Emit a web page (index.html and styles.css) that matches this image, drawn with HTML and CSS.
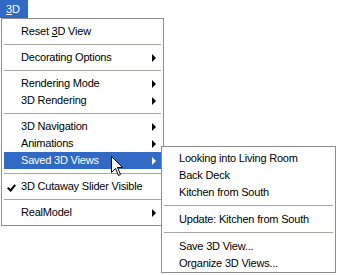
FILE: index.html
```html
<!DOCTYPE html>
<html lang="en">
<head>
    <meta charset="UTF-8">
    <title>3D menu</title>
<link rel="stylesheet" href="styles.css">
</head>
<body>

<div class="menubar">
    <span class="tab"><u>3</u>D</span>
</div>

<div class="menu">
    <div class="item">Reset <u>3</u>D View</div>
    <div class="sep"></div>
    <div class="item sub">Decorating Options</div>
    <div class="sep"></div>
    <div class="item sub">Rendering Mode</div>
    <div class="item sub">3D Rendering</div>
    <div class="sep"></div>
    <div class="item sub">3D Navigation</div>
    <div class="item sub">Animations</div>
    <div class="item sub active">Saved 3D Views</div>
    <div class="sep"></div>
    <div class="item checked">3D Cutaway Slider Visible</div>
    <div class="sep"></div>
    <div class="item sub">RealModel</div>

    <div class="menu submenu">
        <div class="item">Looking into Living Room</div>
        <div class="item">Back Deck</div>
        <div class="item">Kitchen from South</div>
        <div class="sep"></div>
        <div class="item">Update: Kitchen from South</div>
        <div class="sep"></div>
        <div class="item">Save 3D View...</div>
        <div class="item">Organize 3D Views...</div>
    </div>

    <svg class="cursor" width="13" height="21" viewBox="0 0 13 21">
        <path d="M0.5 0.5 L0.5 16.5 L4.5 12.5 L7.5 19.5 L9.5 18.5 L6.5 11.5 L11.5 11.5 Z" fill="#fff" stroke="#000" stroke-width="1"/>
    </svg>
</div>

</body>
</html>
```

FILE: styles.css
```css
html,
body {
  height: 100%;
}

body {
  margin: 0;
  min-height: 275px;
  background: #fff;
  font-family: 'Liberation Sans', Tahoma, sans-serif;
  font-size: 11px;
  letter-spacing: -0.2px;
  color: #000;
}

.menubar {
  height: 18px;
}

.tab {
  display: inline-block;
  width: 28px;
  height: 18px;
  line-height: 18px;
  padding-left: 6px;
  box-sizing: border-box;
  background: #316ac5;
  color: #fff;
}

.menu {
  position: relative;
  width: 163px;
  margin-left: 1px;
  padding: 4px 2px 4px 2px;
  box-sizing: border-box;
  background: #fff;
  border: 1px solid #8d8d8d;
}

.item {
  position: relative;
  height: 17px;
  line-height: 17px;
  padding-left: 17px;
  white-space: nowrap;
}

.item.sub::after {
  content: "";
  position: absolute;
  right: 5px;
  top: 5px;
  border-left: 4px solid #000;
  border-top: 4px solid transparent;
  border-bottom: 4px solid transparent;
}

.item.active {
  background: #316ac5;
  color: #fff;
}

.item.active::after {
  border-left-color: #fff;
}

.item.checked::before {
  content: "";
  position: absolute;
  left: 5px;
  top: 5px;
  width: 3px;
  height: 6px;
  border-right: 2px solid #000;
  border-bottom: 2px solid #000;
  transform: rotate(40deg);
}

.sep {
  height: 1px;
  margin: 4px 0 4px 0;
  background: #a7a6a0;
}

.submenu {
  position: absolute;
  left: 158px;
  top: 127px;
  width: 175px;
  padding: 3px 2px 0 2px;
}

.submenu .item {
  padding-left: 15px;
}

.submenu .sep {
  margin: 4px 0 5px 0;
}

.cursor {
  position: absolute;
  left: 109px;
  top: 137px;
}
```
